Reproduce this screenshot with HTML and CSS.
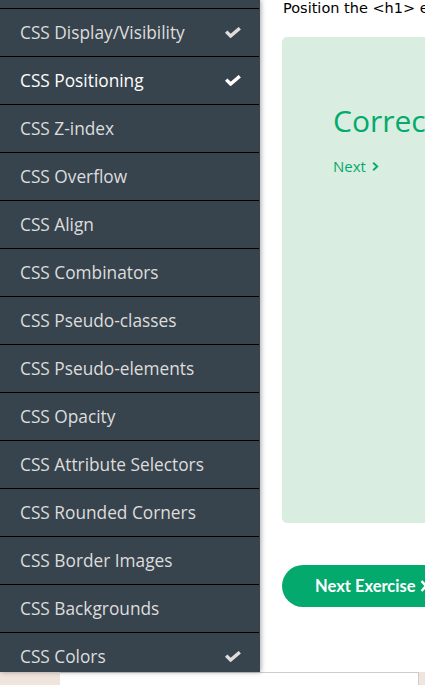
FILE: index.html
```html
<!DOCTYPE html>
<html lang="en">
<head>
<meta charset="utf-8">
<title>CSS Positioning Exercise</title>
<link rel="stylesheet" href="styles.css">
</head>
<body>
<div class="page">
  <nav class="sidebar">
    <ul class="menu">
      <li class="item">CSS Max-width</li>
      <li class="item done">CSS Display/Visibility<svg class="check" viewBox="0 0 16 11"><polyline points="1.2,4.6 5.6,9 14.8,1.2"/></svg></li>
      <li class="item done active">CSS Positioning<svg class="check" viewBox="0 0 16 11"><polyline points="1.2,4.6 5.6,9 14.8,1.2"/></svg></li>
      <li class="item">CSS Z-index</li>
      <li class="item">CSS Overflow</li>
      <li class="item">CSS Align</li>
      <li class="item">CSS Combinators</li>
      <li class="item">CSS Pseudo-classes</li>
      <li class="item">CSS Pseudo-elements</li>
      <li class="item">CSS Opacity</li>
      <li class="item">CSS Attribute Selectors</li>
      <li class="item">CSS Rounded Corners</li>
      <li class="item">CSS Border Images</li>
      <li class="item">CSS Backgrounds</li>
      <li class="item done">CSS Colors<svg class="check" viewBox="0 0 16 11"><polyline points="1.2,4.6 5.6,9 14.8,1.2"/></svg></li>
      <li class="item">CSS Color Keywords</li>
    </ul>
  </nav>
  <main class="main">
    <p class="task">Position the &lt;h1&gt; element so that it always stays in place.</p>
    <section class="result">
      <h2 class="correct">Correct!</h2>
      <a class="next-link">Next<svg class="chev-icon" viewBox="0 0 7 9"><polyline points="1.2,0.8 5.2,4.5 1.2,8.2"/></svg></a>
    </section>
    <a class="next-btn">Next Exercise<svg class="btn-chev" viewBox="0 0 8 12"><polyline points="1.5,1 6,6 1.5,11"/></svg></a>
  </main>
</div>
<div class="footer">
  <div class="footer-box"></div>
</div>
</body>
</html>
```

FILE: styles.css
```css
* { box-sizing: border-box; }
html, body { margin: 0; padding: 0; background: #fff; overflow: hidden; }
body { width: 425px; height: 685px; }

.page {
  display: flex;
  height: 672px;
}

.sidebar {
  width: 260px;
  flex: 0 0 260px;
  background: #38444d;
  overflow: hidden;
  box-shadow: 1px 0 5px rgba(0,0,0,0.35);
  position: relative;
  z-index: 2;
}

.menu {
  list-style: none;
  margin: -40px 0 0 0;
  padding: 0;
}

.item {
  width: 259px;
  height: 48px;
  border-top: 1px solid #000;
  display: flex;
  align-items: center;
  justify-content: space-between;
  padding: 0 18px 1px 20px;
  font-family: "Open Sans", "Noto Sans", sans-serif;
  font-size: 17.3px;
  color: #dddddd;
}

.item.active { color: #ffffff; }

.check {
  width: 16px;
  height: 11px;
  fill: none;
  stroke: #dddddd;
  stroke-width: 3.4;
  stroke-linejoin: miter;
  stroke-linecap: butt;
}
.active .check { stroke: #ffffff; }

.main {
  flex: 1;
  min-width: 0;
  overflow: hidden;
  padding-left: 22px;
}

.task {
  margin: 0;
  font-family: "DejaVu Sans", Verdana, sans-serif;
  font-size: 14.5px;
  line-height: 17px;
  color: #000;
  white-space: nowrap;
  padding-left: 1px;
}

.result {
  margin-top: 20px;
  width: 500px;
  height: 486px;
  background: #d9eee1;
  border-radius: 5px;
  padding: 64px 0 0 51px;
}

.correct {
  margin: 0;
  font-family: "Open Sans", "Noto Sans", sans-serif;
  font-weight: 400;
  font-size: 30px;
  line-height: 40px;
  color: #04aa6d;
  white-space: nowrap;
}

.next-link {
  display: flex;
  align-items: center;
  margin-top: 15px;
  font-family: "Open Sans", "Noto Sans", sans-serif;
  font-size: 15px;
  line-height: 20px;
  color: #04aa6d;
}
.chev-icon {
  width: 7px;
  height: 9px;
  margin-left: 6px;
  margin-top: 1px;
  fill: none;
  stroke: #04aa6d;
  stroke-width: 1.9;
}

.next-btn {
  display: inline-flex;
  align-items: center;
  margin-top: 42px;
  height: 42px;
  padding: 0 28px 0 33px;
  border-radius: 21px;
  background: #04aa6d;
  color: #fff;
  font-family: Lato, sans-serif;
  font-weight: 700;
  font-size: 16.5px;
  white-space: nowrap;
}
.btn-chev {
  width: 8px;
  height: 12px;
  margin-left: 4px;
  fill: none;
  stroke: #fff;
  stroke-width: 2.4;
}

.footer {
  height: 13px;
  background: #f0e4dd;
  padding-left: 60px;
  padding-right: 6px;
}
.footer-box {
  height: 13px;
  background: #fff;
  border-top: 1px solid #cccccc;
  border-right: 1px solid #cccccc;
}
```
